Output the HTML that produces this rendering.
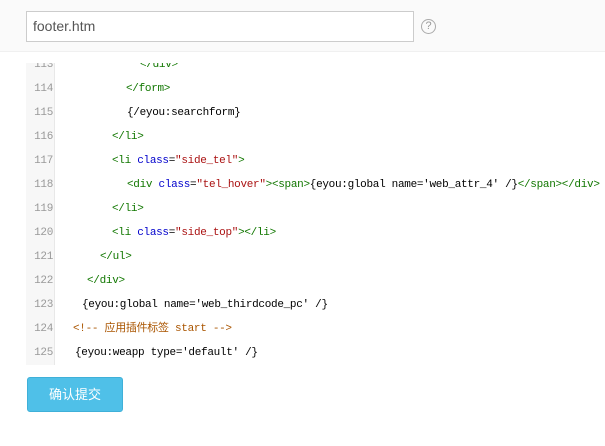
<!DOCTYPE html>
<html><head><meta charset="utf-8"><style>
*{margin:0;padding:0;box-sizing:border-box}
body{width:605px;height:446px;background:#fff;position:relative;overflow:hidden;font-family:"Liberation Sans","Noto Sans CJK SC",sans-serif}
.hdr{position:absolute;left:0;top:0;width:605px;height:52px;background:#fafafa;border-bottom:1px solid #f0f0f0}
.inp{position:absolute;left:26px;top:11px;width:388px;height:31px;border:1px solid #ccc;background:#fff;font-size:14px;color:#555;padding:6px 0 0 6px}
.help{position:absolute;left:421px;top:19px;width:15px;height:15px;border:1px solid #aaa;border-radius:50%;color:#999;font-size:11px;text-align:center;line-height:13px}
.gut{position:absolute;left:26px;top:63px;width:29px;height:302px;background:#f7f7f7;border-right:1px solid #e8e8e8}
.code{position:absolute;left:0;top:63px;width:605px;height:302px;overflow:hidden}
.ln{position:absolute;height:24px;line-height:24px;font-family:"Liberation Mono","Noto Sans CJK SC",monospace;font-size:11px;letter-spacing:-0.3px;white-space:pre;color:#000}
.n{left:26px;width:27px;text-align:right;color:#999}
.t{color:#170}.a{color:#00c}.s{color:#a11}.c{color:#a50}
.btn{position:absolute;left:27px;top:377px;width:96px;height:35px;background:#4fc0e8;border:1px solid #3fb0d8;border-radius:3px;color:#fff;font-size:13px;text-align:center;line-height:33px}
</style></head><body>
<div class="hdr"><div class="inp">footer.htm</div><div class="help">?</div></div>
<div class="gut"></div>
<div class="code">
<div class="ln n" style="top:-10px">113</div><div class="ln" style="top:-10px;left:140px"><span class="t">&lt;/div&gt;</span></div>
<div class="ln n" style="top:14px">114</div><div class="ln" style="top:14px;left:126px"><span class="t">&lt;/form&gt;</span></div>
<div class="ln n" style="top:38px">115</div><div class="ln" style="top:38px;left:127px">{/eyou:searchform}</div>
<div class="ln n" style="top:62px">116</div><div class="ln" style="top:62px;left:112px"><span class="t">&lt;/li&gt;</span></div>
<div class="ln n" style="top:86px">117</div><div class="ln" style="top:86px;left:112px"><span class="t">&lt;li </span><span class="a">class</span>=<span class="s">"side_tel"</span><span class="t">&gt;</span></div>
<div class="ln n" style="top:110px">118</div><div class="ln" style="top:110px;left:127px"><span class="t">&lt;div </span><span class="a">class</span>=<span class="s">"tel_hover"</span><span class="t">&gt;&lt;span&gt;</span>{eyou:global name='web_attr_4' /}<span class="t">&lt;/span&gt;&lt;/div&gt;</span></div>
<div class="ln n" style="top:134px">119</div><div class="ln" style="top:134px;left:112px"><span class="t">&lt;/li&gt;</span></div>
<div class="ln n" style="top:158px">120</div><div class="ln" style="top:158px;left:112px"><span class="t">&lt;li </span><span class="a">class</span>=<span class="s">"side_top"</span><span class="t">&gt;&lt;/li&gt;</span></div>
<div class="ln n" style="top:182px">121</div><div class="ln" style="top:182px;left:100px"><span class="t">&lt;/ul&gt;</span></div>
<div class="ln n" style="top:206px">122</div><div class="ln" style="top:206px;left:87px"><span class="t">&lt;/div&gt;</span></div>
<div class="ln n" style="top:230px">123</div><div class="ln" style="top:230px;left:82px">{eyou:global name='web_thirdcode_pc' /}</div>
<div class="ln n" style="top:254px">124</div><div class="ln" style="top:254px;left:73px"><span class="c">&lt;!-- 应用插件标签 start --&gt;</span></div>
<div class="ln n" style="top:278px">125</div><div class="ln" style="top:278px;left:75px">{eyou:weapp type='default' /}</div>
</div>
<div class="btn">确认提交</div>
</body></html>
